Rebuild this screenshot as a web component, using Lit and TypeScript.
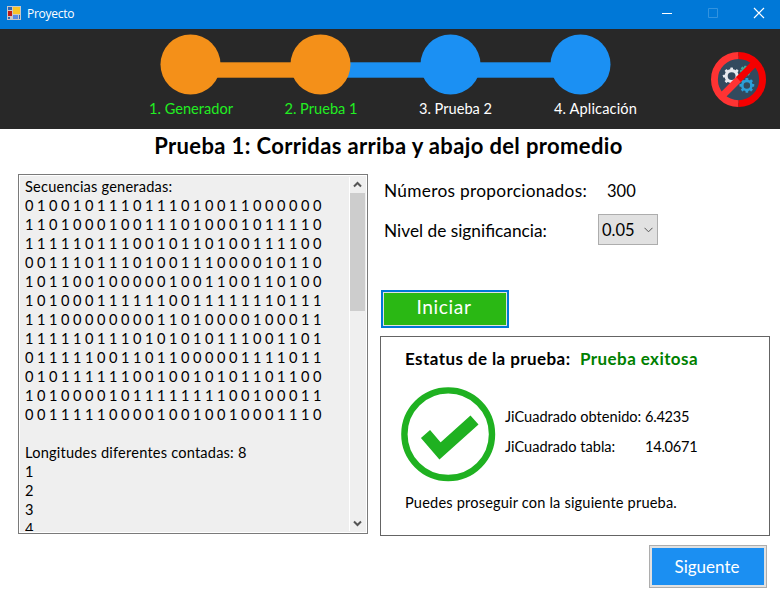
import { LitElement, html, css, svg } from "lit";
import { customElement } from "lit/decorators.js";

const ROWS = [
  "0100101110111010011000000",
  "1101000100111010001011110",
  "1111101110010110100111100",
  "0011101110100111000010110",
  "1011001000001001100110100",
  "1010001111110011111110111",
  "1110000000011010000100011",
  "1111101110101010111001101",
  "0111110011011000001111011",
  "0101111110010010101101100",
  "1010000101111111100100011",
  "0011111000010010010001110",
];

const STEPS = [
  { label: "1. Generador", done: true, cls: "" },
  { label: "2. Prueba 1", done: true, cls: "" },
  { label: "3. Prueba 2", done: false, cls: "third" },
  { label: "4. Aplicación", done: false, cls: "fourth" },
];

const gear = (cx: number, cy: number, r: number, w: number, fill: string) => svg`
  <g transform="translate(${cx} ${cy})">
    <circle r=${r} fill="none" stroke=${fill} stroke-width=${w}></circle>
    ${[0, 45, 90, 135, 180, 225, 270, 315].map(
      (a) => svg`<rect x="-1.4" y=${-(r + w / 2 + 1.6)} width="2.8" height="3" rx=".5" fill=${fill} transform="rotate(${a})"></rect>`
    )}
  </g>`;

@customElement("app-root")
export class AppRoot extends LitElement {
  static styles = css`
    :host { display: block; width: 780px; height: 589px; background: #fff; overflow: hidden;
      font-family: Lato, "Liberation Sans", sans-serif; font-size: 14.6px; color: #000; }
    * { box-sizing: border-box; }
    svg { display: block; }
    .titlebar { height: 29px; background: #0078d7; color: #fff; display: flex; align-items: center;
      padding: 0 15px 3px 7px; font: 12px "Open Sans", "Noto Sans", sans-serif; }
    .caption { margin-left: 6px; flex: 1; letter-spacing: -0.25px; }
    .controls { display: flex; gap: 34px; }
    .header { height: 100px; background: #282828; display: flex; }
    .steps { margin-left: 126px; display: grid; grid-template-columns: repeat(4, 130px); padding-top: 5px; }
    .step { display: flex; flex-direction: column; align-items: center; }
    .rail { width: 130px; height: 61px; }
    .label { line-height: 20px; margin-top: 4px; color: #fff; white-space: nowrap; }
    .label.done { color: #22ee22; }
    .label.third { padding-left: 9px; }
    .label.fourth { padding-left: 29px; letter-spacing: .15px; }
    .gears { margin: 23px 0 0 65px; }
    .heading { font-size: 22px; letter-spacing: .37px; font-weight: 700; line-height: 33px; height: 45px;
      text-align: center; padding-right: 3px; white-space: nowrap; }
    .body { display: flex; padding-left: 18px; }
    .log { width: 350px; height: 360px; border: 1px solid #7a7a7a; background: #efefef; display: flex;
      box-shadow: inset 0 0 0 1px #fff; padding: 2px 2px 2px 6px; }
    .lines { flex: 1; height: 354px; overflow: hidden; line-height: 19px; white-space: nowrap; }
    .line { height: 19px; letter-spacing: .2px; }
    .bits { display: grid; grid-template-columns: repeat(25, 12px); letter-spacing: 0; }
    .scroll { width: 16px; border-left: 1px solid #fff; display: flex; flex-direction: column; align-items: center; }
    .thumb { width: 15px; height: 118px; background: #cdcdcd; }
    .spacer { flex: 1; }
    .side { margin-left: 12px; width: 390px; font-size: 16.5px; }
    .row { display: flex; align-items: center; padding-left: 4px; }
    .count { height: 34px; }
    .level { height: 46px; }
    .name { width: 223px; font-size: 17.3px; letter-spacing: .3px; padding-bottom: 2px; }
    .name.wide { width: 214px; letter-spacing: 0; }
    .select { width: 60px; height: 31px; border: 1px solid #adadad; background: #e1e1e1; display: flex; margin-bottom: 3px;
      align-items: center; justify-content: space-between; padding: 0 4px 0 3px; }
    .start { margin: 36px 0 0 1px; width: 128px; height: 38px; background: #2ab814; border: 2px solid #0078d7;
      box-shadow: inset 0 0 0 1px #e1e1e1; color: #fff; font-size: 19.2px; text-align: center; line-height: 29px;
      letter-spacing: .6px; padding-right: 2px; }
    .status { margin-top: 8px; width: 390px; height: 200px; border: 1px solid #646464; padding: 11px 0 0 20px; }
    .verdict { display: flex; font-size: 17px; letter-spacing: .42px; font-weight: 700; line-height: 22px; padding-left: 4px; }
    .verdict .key { width: 175px; }
    .ok { color: #008000; }
    .result { display: flex; margin-top: 17px; font-size: 14.6px; }
    .stats { margin: 15px 0 0 9px; display: grid; grid-template-columns: 140px auto; grid-auto-rows: 30px;
      line-height: 30px; height: 60px; white-space: nowrap; }
    .value { letter-spacing: -.25px; }
    .note { font-size: 14.6px; letter-spacing: .17px; line-height: 20px; margin: 11px 0 0 4px; }
    .footer { display: flex; justify-content: flex-end; padding: 9px 13px 0 0; }
    .next { width: 118px; height: 43px; border: 1px solid #adadad; box-shadow: inset 0 0 0 2px #e1e1e1;
      background: #1b8ff2; color: #fff; font-size: 17px; text-align: center; line-height: 42px; padding-right: 2px; }
  `;

  render() {
    return html`
      <div class="titlebar">
        <svg width="14" height="14" viewBox="0 0 14 14">
          <path fill="#c8c8c8" d="M0 0h14v14H0z" /><path fill="#2e65b5" d="M1 1h4v3H1zM1 11h2v2H1zM12 9h1v4h-1z" />
          <path fill="#c21b17" d="M1 5h4v5H1z" /><path fill="#f8c529" d="M6 1h7v7H6z" /><path fill="#5b8ce0" d="M6 9h5v4H6z" />
        </svg>
        <span class="caption">Proyecto</span>
        <div class="controls">
          <svg width="12" height="12"><path stroke="#fff" d="M1 6.500h10" /></svg>
          <svg width="12" height="12"><path fill="none" stroke="#3293df" d="M1.5 1.5h9v9h-9z" /></svg>
          <svg width="12" height="12"><path stroke="#fff" stroke-width="1.2" d="M1 1l10 10M11 1L1 11" /></svg>
        </div>
      </div>
      <div class="header">
        <div class="steps">
          ${STEPS.map((s, i) => {
            const color = (done: boolean) => (done ? "#f49019" : "#1b90f3");
            return html`<div class="step">
              <svg class="rail" viewBox="0 0 130 61">
                ${i > 0 ? svg`<rect y="28.3" width="65" height="15.4" fill=${color(s.done)}></rect>` : ""}
                ${i < 3 ? svg`<rect x="65" y="28.3" width="65" height="15.4" fill=${color(STEPS[i + 1].done)}></rect>` : ""}
                <circle cx="64.5" cy="30.5" r="30" fill=${color(s.done)} />
              </svg>
              <div class="label ${s.done ? "done" : ""} ${s.cls}">${s.label}</div>
            </div>`;
          })}
        </div>
        <svg class="gears" width="55" height="55" viewBox="0 0 56 56">
          <circle cx="28" cy="28" r="24" fill="#324a5e" />
          ${gear(35, 19.5, 3, 1.6, "#3fae9c")}
          ${gear(21, 24.5, 5.6, 3.2, "#e6e9ee")}
          ${gear(36.5, 34, 4.6, 2.6, "#2b9fd9")}
          <path d="M28 3.500A24.5 24.5 0 0 0 28 52.5M28.500 27.500L11 45" fill="none" stroke="#ff3333" stroke-width="7" />
          <path d="M28 3.500A24.5 24.5 0 0 1 28 52.5M28 28L45 11" fill="none" stroke="#f40000" stroke-width="7" />
        </svg>
      </div>
      <div class="heading">Prueba 1: Corridas arriba y abajo del promedio</div>
      <div class="body">
        <div class="log">
          <div class="lines">
            <div class="line">Secuencias generadas:</div>
            ${ROWS.map((r) => html`<div class="line bits">${[...r].map((b) => html`<span>${b}</span>`)}</div>`)}
            <div class="line"></div>
            <div class="line">Longitudes diferentes contadas: 8</div>
            ${[1, 2, 3, 4].map((n) => html`<div class="line">${n}</div>`)}
          </div>
          <div class="scroll">
            <svg width="15" height="16"><path d="M4 9.5L7.5 6L11 9.5" fill="none" stroke="#555" stroke-width="2" /></svg>
            <div class="thumb"></div><div class="spacer"></div>
            <svg width="15" height="16"><path d="M4 6.500L7.5 10L11 6.500" fill="none" stroke="#555" stroke-width="2" /></svg>
          </div>
        </div>
        <div class="side">
          <div class="row count"><span class="name">Números proporcionados:</span><span>300</span></div>
          <div class="row level"><span class="name wide">Nivel de significancia:</span>
            <div class="select"><span>0.05</span><svg width="9" height="6"><path d="M.5 .8L4.5 4.8L8.5 .8" fill="none" stroke="#555" /></svg></div>
          </div>
          <div class="start">Iniciar</div>
          <div class="status">
            <div class="verdict"><span class="key">Estatus de la prueba:</span><span class="ok">Prueba exitosa</span></div>
            <div class="result">
              <svg width="95" height="95" viewBox="0 0 95 95">
                <circle cx="47.2" cy="47.2" r="43.8" fill="none" stroke="#1fb121" stroke-width="6.4" />
                <path d="M24.5 47L39 64L73.500 33" fill="none" stroke="#1fb121" stroke-width="12" />
              </svg>
              <div class="stats"><span>JiCuadrado obtenido:</span><span class="value">6.4235</span><span>JiCuadrado tabla:</span><span class="value">14.0671</span></div>
            </div>
            <div class="note">Puedes proseguir con la siguiente prueba.</div>
          </div>
        </div>
      </div>
      <div class="footer"><div class="next">Siguente</div></div>
    `;
  }
}
